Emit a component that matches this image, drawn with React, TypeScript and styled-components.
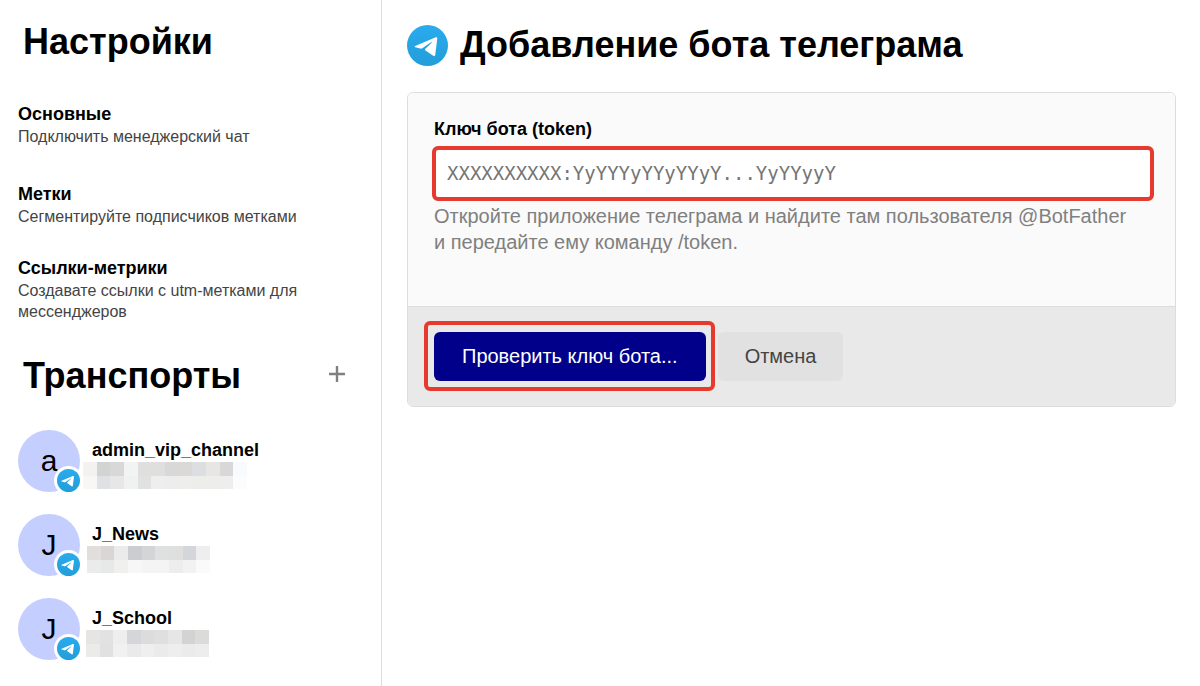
import React from "react";
import styled, { createGlobalStyle } from "styled-components";

const GlobalStyle = createGlobalStyle`
  * { box-sizing: border-box; }
  body {
    margin: 0;
    background: #fff;
    color: #000;
    font-family: "Liberation Sans", Arial, sans-serif;
  }
`;

const Page = styled.div`
  display: flex;
  align-items: stretch;
  min-height: 100vh;
`;

const Sidebar = styled.aside`
  flex: 0 0 382px;
  border-right: 1px solid #ddd;
  padding: 20px 36px 24px 18px;
`;

const Title = styled.h1`
  margin: 0;
  font-size: 36px;
  line-height: 44px;
  font-weight: 700;
`;

const SidebarTitle = styled(Title)`
  padding-left: 5px;
`;

const Menu = styled.nav`
  display: flex;
  flex-direction: column;
  gap: 30px;
  margin-top: 39px;
`;

const ItemName = styled.strong`
  display: block;
  color: #000;
  font-size: 18px;
  line-height: 22px;
`;

const MenuLink = styled.a`
  display: block;
  color: #444;
  font-size: 16px;
  line-height: 21px;
  text-decoration: none;

  &:first-child { margin-bottom: 6px; }
  ${ItemName} { margin-bottom: 1px; }
`;

const SectionHead = styled.div`
  display: flex;
  align-items: center;
  justify-content: space-between;
  margin-top: 32px;
`;

const AddButton = styled.button`
  display: flex;
  padding: 0 0 4px;
  border: 0;
  background: none;
  color: #808080;
  cursor: pointer;
`;

const Channels = styled.ul`
  display: flex;
  flex-direction: column;
  gap: 22px;
  margin: 32px 0 0;
  padding: 0;
  list-style: none;
`;

const Channel = styled.li`
  display: flex;
  gap: 12px;
`;

const Avatar = styled.div`
  position: relative;
  display: flex;
  align-items: center;
  justify-content: center;
  flex: none;
  width: 62px;
  height: 62px;
  border-radius: 50%;
  background: #c5cfff;
  font-size: 30px;
`;

const Badge = styled.span`
  position: absolute;
  right: -3px;
  bottom: -3px;
  display: flex;
  padding: 3px;
  border-radius: 50%;
  background: #fff;
`;

const ChannelText = styled.div`
  padding-top: 9px;
`;

const Mosaic = styled.svg<{ $shift: number }>`
  display: block;
  margin: 1px 0 0 -${(p) => p.$shift}px;
`;

const Main = styled.main`
  flex: 1;
  min-width: 0;
  padding: 23px 24px 24px 25px;
`;

const PageHead = styled.header`
  display: flex;
  align-items: center;
  gap: 12px;
`;

const Card = styled.form`
  margin-top: 25px;
  border: 1px solid #ddd;
  border-radius: 6px;
  overflow: hidden;
`;

const Fields = styled.div`
  padding: 24px 21px 51px 24px;
  background: #fafafa;
`;

const Label = styled.label`
  display: block;
  padding-left: 2px;
  font-size: 18px;
  line-height: 24px;
  font-weight: 700;
`;

const TokenInput = styled.input`
  display: block;
  width: 100%;
  height: 55px;
  margin-top: 5px;
  padding: 0 11px 2px;
  border: 4px solid #e63a2e;
  border-radius: 6px;
  background: #fff;
  font-family: "DejaVu Sans Mono", monospace;
  font-size: 19px;
  &::placeholder { color: #757575; opacity: 1; }
`;

const Hint = styled.p`
  margin: 2px 0 0;
  padding: 0 20px 0 2px;
  color: #808080;
  font-size: 20px;
  line-height: 26px;
`;

const Actions = styled.div`
  display: flex;
  align-items: center;
  gap: 3px;
  padding: 14px 16px 15px;
  border-top: 1px solid #ddd;
  background: #e9e9e9;
`;

const Highlight = styled.div`
  padding: 7px 5px 6px 6px;
  border: 4px solid #e63a2e;
  border-radius: 6px;
`;

const Button = styled.button<{ $primary?: boolean }>`
  display: block;
  height: 49px;
  padding: 0 ${(p) => (p.$primary ? 28 : 27)}px;
  border: 0;
  border-radius: 6px;
  background: ${(p) => (p.$primary ? "#00008b" : "#e1e1e1")};
  color: ${(p) => (p.$primary ? "#fff" : "#444")};
  font-family: inherit;
  font-size: 20px;
  cursor: pointer;
`;

function TelegramLogo({ size, id }: { size: number; id: string }) {
  return (
    <svg width={size} height={size} viewBox="0 0 42 42" aria-hidden="true">
      <defs>
        <linearGradient id={id} x1="0" y1="0" x2="0" y2="1">
          <stop offset="0" stopColor="#2aabee" />
          <stop offset="1" stopColor="#229ed9" />
        </linearGradient>
      </defs>
      <circle cx="21" cy="21" r="21" fill={`url(#${id})`} />
      <path
        fill="#fff"
        d="M8.4 21.4L28.9 12.8C30.3 12.3 31.1 12.8 31 14.1L28.9 30.8C28.7 32 27.9 32.2 26.9 31.5L18.9 26.1C18.3 25.6 18.3 24.9 18.9 24.3L25.2 18.1C25.6 17.6 25.1 17.3 24.5 17.7L15.7 23.8C15 24.3 14.2 24.3 13.4 24.1L8.6 22.7C7.6 22.4 7.6 21.7 8.4 21.4Z"
      />
    </svg>
  );
}

const CELL = 13.67;

function HiddenText({ rows, shift }: { rows: string[][]; shift: number }) {
  const width = Math.round(rows[0].length * CELL);
  return (
    <Mosaic $shift={shift} width={width} height={27} viewBox={`0 0 ${width} 27`} shapeRendering="crispEdges" aria-hidden="true">
      {rows.map((row, y) =>
        row.map((fill, x) => (
          <rect key={`${x}-${y}`} x={x * CELL} y={y * CELL} width={CELL} height={CELL} fill={fill} />
        ))
      )}
    </Mosaic>
  );
}

const menu = [
  { name: "Основные", text: "Подключить менеджерский чат" },
  { name: "Метки", text: "Сегментируйте подписчиков метками" },
  { name: "Ссылки-метрики", text: "Создавате ссылки с utm-метками для мессенджеров" },
];

const channels = [
  {
    name: "admin_vip_channel",
    letter: "a",
    shift: 9,
    rows: [
      ["#f3f2f1", "#d1d4d3", "#d8d8d8", "#f1f4f3", "#dfdfdd", "#dfdfdd", "#d9d8d8", "#dad9d8", "#dcdee1", "#e8e6e4", "#d9d7d8", "#f8fafd"],
      ["#f9f7f5", "#dfe1e4", "#e7e7e7", "#eff2f1", "#e1e1e1", "#ecefee", "#ededed", "#eeeeed", "#ededeb", "#ededeb", "#eeeeee", "#fbfdfd"],
    ],
  },
  {
    name: "J_News",
    letter: "J",
    shift: 5,
    rows: [
      ["#e0dfde", "#d9d6d5", "#ebebeb", "#cccdd0", "#d4d5d7", "#dfe1e1", "#dfdfde", "#d5d6d9", "#eeeeee"],
      ["#ebebeb", "#e6e9e8", "#f0f0ef", "#f7f7f7", "#f4f4f4", "#f4f4f4", "#ededee", "#f2f2f2", "#fafafa"],
    ],
  },
  {
    name: "J_School",
    letter: "J",
    shift: 6,
    rows: [
      ["#e7e5e3", "#e2e2e2", "#eeeeef", "#d5d6d9", "#dcdcdd", "#dfdfe0", "#e6e6e7", "#d3d3d4", "#dbdbda"],
      ["#ebebea", "#e1e1e1", "#f1f1f1", "#eaeaeb", "#efefef", "#ebebec", "#eeeeee", "#ebebeb", "#ededed"],
    ],
  },
];

export default function App() {
  return (
    <>
      <GlobalStyle />
      <Page>
        <Sidebar>
          <SidebarTitle>Настройки</SidebarTitle>
          <Menu>
            {menu.map((item) => (
              <MenuLink href="#" key={item.name}>
                <ItemName>{item.name}</ItemName>
                {item.text}
              </MenuLink>
            ))}
          </Menu>
          <SectionHead>
            <SidebarTitle as="h2">Транспорты</SidebarTitle>
            <AddButton type="button" aria-label="Добавить транспорт">
              <svg width="16" height="16" viewBox="0 0 16 16" aria-hidden="true">
                <path d="M8 0V16M0 8H16" stroke="currentColor" strokeWidth="2.4" />
              </svg>
            </AddButton>
          </SectionHead>
          <Channels>
            {channels.map((c, i) => (
              <Channel key={c.name}>
                <Avatar>
                  {c.letter}
                  <Badge>
                    <TelegramLogo size={23} id={`badge-${i}`} />
                  </Badge>
                </Avatar>
                <ChannelText>
                  <ItemName>{c.name}</ItemName>
                  <HiddenText rows={c.rows} shift={c.shift} />
                </ChannelText>
              </Channel>
            ))}
          </Channels>
        </Sidebar>
        <Main>
          <PageHead>
            <TelegramLogo size={41} id="head-logo" />
            <Title>Добавление бота телеграма</Title>
          </PageHead>
          <Card>
            <Fields>
              <Label htmlFor="token">Ключ бота (token)</Label>
              <TokenInput id="token" type="text" placeholder="XXXXXXXXXX:YyYYYyYYyYYyY...YyYYyyY" />
              <Hint>
                Откройте приложение телеграма и найдите там пользователя @BotFather и передайте ему команду /token.
              </Hint>
            </Fields>
            <Actions>
              <Highlight>
                <Button type="button" $primary>Проверить ключ бота...</Button>
              </Highlight>
              <Button type="button">Отмена</Button>
            </Actions>
          </Card>
        </Main>
      </Page>
    </>
  );
}
